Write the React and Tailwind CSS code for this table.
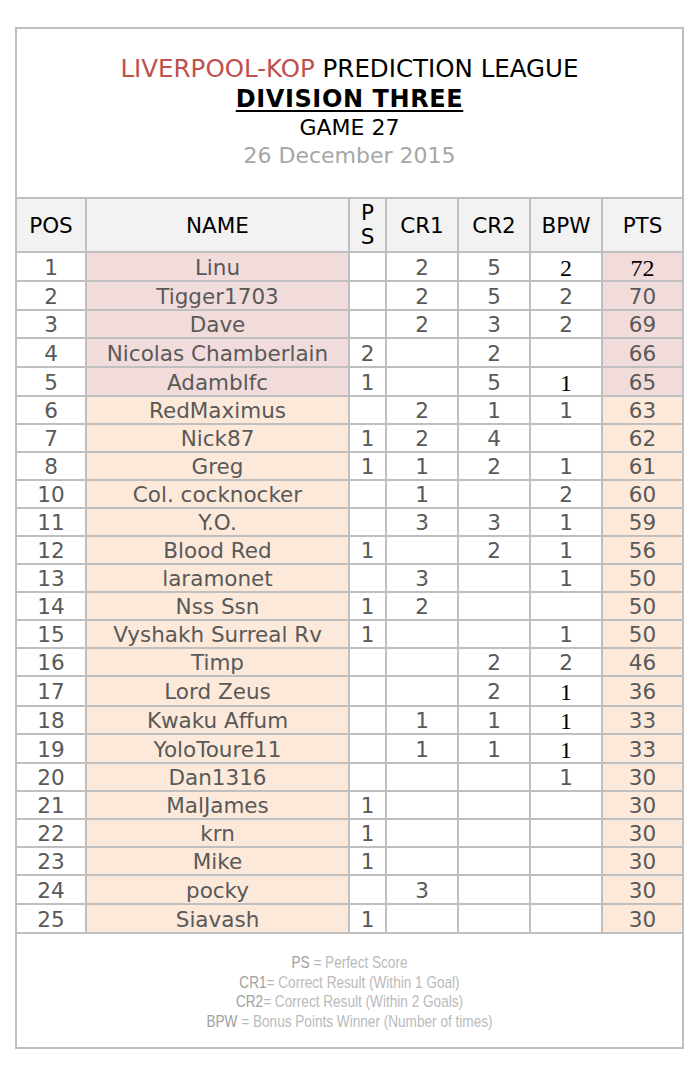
const SANS = { fontFamily: '"DejaVu Sans", Verdana, sans-serif' }

// serif: true marks the odd Times-looking digits in the original sheet
const rows = [
  { pos: 1, name: 'Linu', ps: '', cr1: '2', cr2: '5', bpw: '2', bpwSerif: true, pts: '72', ptsSerif: true, top: true, h: 'h-[29px]' },
  { pos: 2, name: 'Tigger1703', ps: '', cr1: '2', cr2: '5', bpw: '2', pts: '70', top: true, h: 'h-[29px]' },
  { pos: 3, name: 'Dave', ps: '', cr1: '2', cr2: '3', bpw: '2', pts: '69', top: true },
  { pos: 4, name: 'Nicolas Chamberlain', ps: '2', cr1: '', cr2: '2', bpw: '', pts: '66', top: true, h: 'h-[29px]' },
  { pos: 5, name: 'Adamblfc', ps: '1', cr1: '', cr2: '5', bpw: '1', bpwSerif: true, pts: '65', top: true, h: 'h-[29px]' },
  { pos: 6, name: 'RedMaximus', ps: '', cr1: '2', cr2: '1', bpw: '1', pts: '63' },
  { pos: 7, name: 'Nick87', ps: '1', cr1: '2', cr2: '4', bpw: '', pts: '62' },
  { pos: 8, name: 'Greg', ps: '1', cr1: '1', cr2: '2', bpw: '1', pts: '61' },
  { pos: 10, name: 'Col. cocknocker', ps: '', cr1: '1', cr2: '', bpw: '2', pts: '60' },
  { pos: 11, name: 'Y.O.', ps: '', cr1: '3', cr2: '3', bpw: '1', pts: '59' },
  { pos: 12, name: 'Blood Red', ps: '1', cr1: '', cr2: '2', bpw: '1', pts: '56' },
  { pos: 13, name: 'laramonet', ps: '', cr1: '3', cr2: '', bpw: '1', pts: '50' },
  { pos: 14, name: 'Nss Ssn', ps: '1', cr1: '2', cr2: '', bpw: '', pts: '50' },
  { pos: 15, name: 'Vyshakh Surreal Rv', ps: '1', cr1: '', cr2: '', bpw: '1', pts: '50' },
  { pos: 16, name: 'Timp', ps: '', cr1: '', cr2: '2', bpw: '2', pts: '46' },
  { pos: 17, name: 'Lord Zeus', ps: '', cr1: '', cr2: '2', bpw: '1', bpwSerif: true, pts: '36', h: 'h-[30px]' },
  { pos: 18, name: 'Kwaku Affum', ps: '', cr1: '1', cr2: '1', bpw: '1', bpwSerif: true, pts: '33' },
  { pos: 19, name: 'YoloToure11', ps: '', cr1: '1', cr2: '1', bpw: '1', bpwSerif: true, pts: '33', h: 'h-[29px]' },
  { pos: 20, name: 'Dan1316', ps: '', cr1: '', cr2: '', bpw: '1', pts: '30' },
  { pos: 21, name: 'MalJames', ps: '1', cr1: '', cr2: '', bpw: '', pts: '30' },
  { pos: 22, name: 'krn', ps: '1', cr1: '', cr2: '', bpw: '', pts: '30' },
  { pos: 23, name: 'Mike', ps: '1', cr1: '', cr2: '', bpw: '', pts: '30' },
  { pos: 24, name: 'pocky', ps: '', cr1: '3', cr2: '', bpw: '', pts: '30', h: 'h-[29px]' },
  { pos: 25, name: 'Siavash', ps: '1', cr1: '', cr2: '', bpw: '', pts: '30' },
]

function Num({ value, serif }) {
  if (!serif) return value
  return (
    <span className="text-black text-[24px]" style={{ fontFamily: '"Liberation Serif", "Times New Roman", serif' }}>
      {value}
    </span>
  )
}

const cell = 'border-2 border-[#bfbfbf] text-center align-middle p-0 pt-[2px]'

export default function App() {
  return (
    <div className="min-h-screen bg-white pt-[27px] pl-[15px]" style={SANS}>
      <div className="w-[669px] border-2 border-[#bfbfbf]">
        {/* Title */}
        <div className="flex flex-col items-center pt-[25px] pb-[27px] border-b-2 border-[#bfbfbf]">
          <div className="text-[24.5px] leading-[30px] text-black">
            <span className="text-[#c0504d]">LIVERPOOL-KOP</span> PREDICTION LEAGUE
          </div>
          <div className="text-[24px] leading-[30px] font-bold underline underline-offset-[3px] decoration-2 text-black tracking-[0.6px]">
            DIVISION THREE
          </div>
          <div className="text-[22px] leading-[28px] text-black">GAME 27</div>
          <div className="text-[22px] leading-[28px] text-[#a6a6a6]">26 December 2015</div>
        </div>

        {/* Table */}
        <table className="w-full table-fixed border-collapse border-hidden text-[21.5px] leading-none text-[#595959]">
          <colgroup>
            <col className="w-[69px]" />
            <col className="w-[263px]" />
            <col className="w-[37px]" />
            <col className="w-[72px]" />
            <col className="w-[72px]" />
            <col className="w-[72px]" />
            <col className="w-[80px]" />
          </colgroup>
          <thead>
            <tr className="h-[53px] bg-[#f2f2f2] text-black">
              <th className={`${cell} font-normal`}>POS</th>
              <th className={`${cell} font-normal`}>NAME</th>
              <th className="border-2 border-[#bfbfbf] text-center align-middle p-0 font-normal">
                <div className="leading-[24px]">P</div>
                <div className="leading-[24px]">S</div>
              </th>
              <th className={`${cell} font-normal`}>CR1</th>
              <th className={`${cell} font-normal`}>CR2</th>
              <th className={`${cell} font-normal`}>BPW</th>
              <th className={`${cell} font-normal`}>PTS</th>
            </tr>
          </thead>
          <tbody>
            {rows.map((r) => {
              const tint = r.top ? 'bg-[#f2dcdb]' : 'bg-[#fde9d9]'
              return (
                <tr key={r.pos} className={r.h || 'h-[28px]'}>
                  <td className={cell}>{r.pos}</td>
                  <td className={`${cell} ${tint} whitespace-nowrap`}>{r.name}</td>
                  <td className={cell}>{r.ps}</td>
                  <td className={cell}>{r.cr1}</td>
                  <td className={cell}>{r.cr2}</td>
                  <td className={cell}><Num value={r.bpw} serif={r.bpwSerif} /></td>
                  <td className={`${cell} ${tint}`}><Num value={r.pts} serif={r.ptsSerif} /></td>
                </tr>
              )
            })}
          </tbody>
        </table>

        {/* Legend */}
        <div className="border-t-2 border-[#bfbfbf] pt-[19px] pb-[16px]">
          <div
            className="flex flex-col items-center scale-x-[0.8] text-[17px] leading-[19.5px] text-[#bababa]"
            style={{ fontFamily: '"Liberation Sans", Arial, sans-serif' }}
          >
            <div><span className="text-[#a0a0a0]">PS</span> = Perfect Score</div>
            <div><span className="text-[#a0a0a0]">CR1</span>= Correct Result (Within 1 Goal)</div>
            <div><span className="text-[#a0a0a0]">CR2</span>= Correct Result (Within 2 Goals)</div>
            <div><span className="text-[#a0a0a0]">BPW</span> = Bonus Points Winner (Number of times)</div>
          </div>
        </div>
      </div>
    </div>
  )
}
